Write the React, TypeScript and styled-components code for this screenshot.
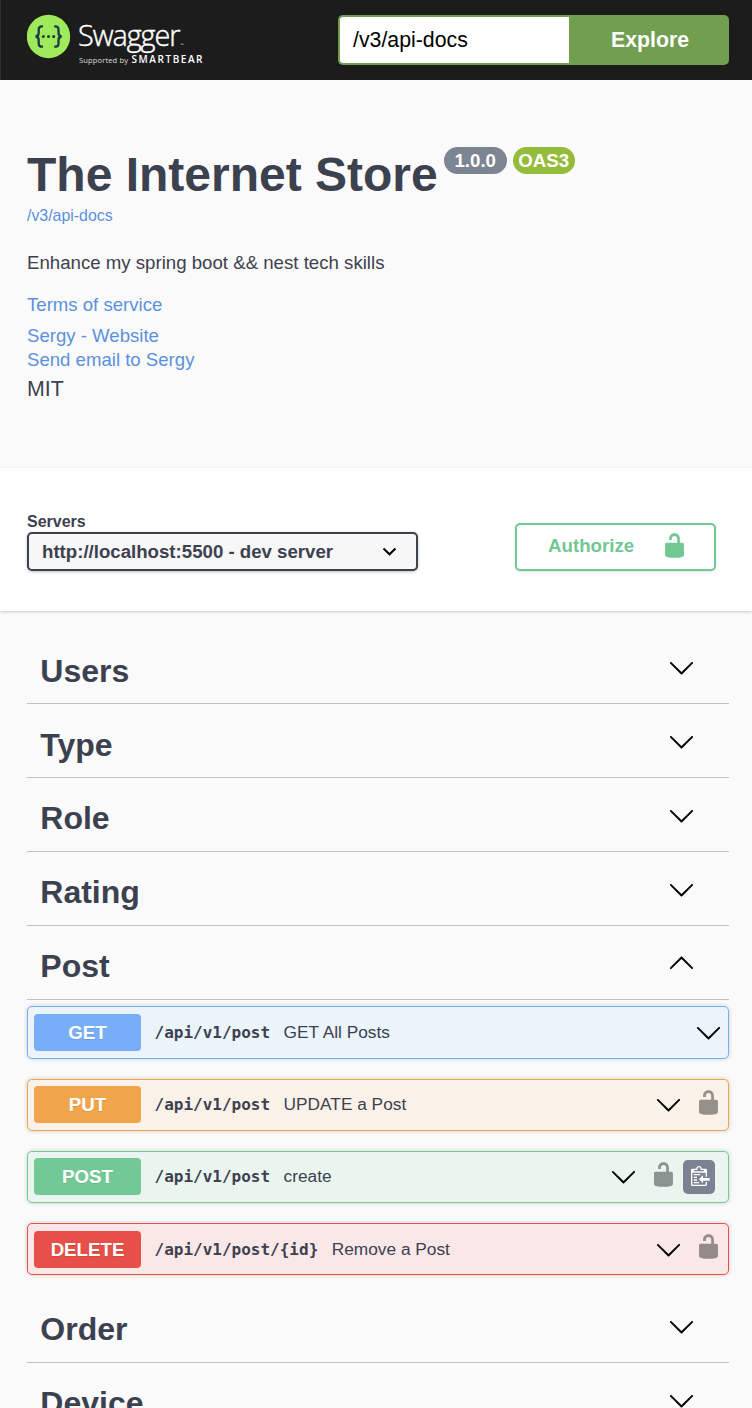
import React from "react";
import styled, { createGlobalStyle } from "styled-components";

const GlobalStyle = createGlobalStyle`
  *, *::before, *::after { box-sizing: border-box; }
  body {
    margin: 0;
    background: #fafafa;
    color: #3c414f;
    font-family: "Liberation Sans", Arial, sans-serif;
  }
  button, input, select { font-family: inherit; }
`;

const Page = styled.div`
  height: 100vh;
  overflow: hidden;
`;

const TopBar = styled.header`
  display: flex;
  align-items: center;
  justify-content: space-between;
  height: 80px;
  padding: 0 23px 0 26px;
  background: #1c1c1c;
  border-left: 1px solid #2f2f2f;
`;

const Logo = styled.svg`
  display: block;
  width: 180px;
  height: 80px;
`;

const UrlForm = styled.form`
  display: flex;
  width: 391px;
  height: 50px;
`;

const UrlInput = styled.input`
  width: 231px;
  padding: 0 13px;
  border: 2px solid #719e4f;
  border-right: 0;
  border-radius: 5px 0 0 5px;
  background: #fff;
  color: #000;
  font-size: 21.3px;
  outline: none;
`;

const ExploreButton = styled.button`
  flex: 1;
  padding: 0 0 0 2px;
  border: 0;
  border-radius: 0 5px 5px 0;
  background: #719e4f;
  color: #fff;
  font-size: 21.3px;
  font-weight: 700;
`;

const Info = styled.section`
  height: 388px;
  padding: 67px 27px 0;
`;

const TitleRow = styled.div`
  display: flex;
  align-items: flex-start;
`;

const Title = styled.h1`
  margin: 0 6px 0 0;
  font-size: 48px;
  line-height: 56px;
  white-space: nowrap;
`;

const Badge = styled.span<{ $color: string; $width: number }>`
  width: ${(p) => p.$width}px;
  height: 27px;
  margin-right: 6px;
  border-radius: 14px;
  background: ${(p) => p.$color};
  color: #fff;
  font-size: 18.7px;
  font-weight: 700;
  line-height: 27px;
  text-align: center;
`;

const InfoLink = styled.a<{ $size?: number; $line?: number; $top?: number }>`
  display: block;
  margin-top: ${(p) => p.$top ?? 0}px;
  color: #5a91de;
  font-size: ${(p) => p.$size ?? 18.6}px;
  line-height: ${(p) => p.$line ?? 24}px;
  text-decoration: none;
`;

const Description = styled.p`
  margin: 24px 0 0;
  font-size: 18.65px;
  line-height: 28px;
`;

const License = styled.div`
  margin-top: 3px;
  font-size: 21.3px;
  line-height: 28px;
`;

const SchemeBar = styled.section`
  display: flex;
  justify-content: space-between;
  height: 143px;
  padding: 44px 36px 0 27px;
  background: #fff;
  box-shadow: 0 1.3px 2.6px rgba(0, 0, 0, 0.2);
`;

const Servers = styled.label`
  display: block;
  width: 391px;
  font-size: 16px;
  font-weight: 700;
  line-height: 20px;
`;

const ServerSelect = styled.div`
  display: flex;
  align-items: center;
  justify-content: space-between;
  height: 39px;
  padding: 0 19px 0 13px;
  border: 2px solid #3c414f;
  border-radius: 5px;
  background: #f7f7f7;
  box-shadow: 0 1px 3px rgba(0, 0, 0, 0.25);
  font-size: 18.65px;
  white-space: nowrap;
`;

const AuthorizeButton = styled.button`
  display: flex;
  justify-content: space-between;
  width: 201px;
  height: 48px;
  margin-top: 11px;
  padding: 7px 26px 0 31px;
  border: 2px solid #72c893;
  border-radius: 5px;
  background: #fff;
  box-shadow: 0 1px 3px rgba(0, 0, 0, 0.12);
  color: #72c893;
  font-size: 18.7px;
  font-weight: 700;
  line-height: 27px;
`;

const Sections = styled.main`
  padding: 19px 23px 0 27px;
`;

const TagRow = styled.div`
  display: flex;
  align-items: center;
  justify-content: space-between;
  height: 73.91px;
  padding: 0 34px 0 13.3px;
  border-bottom: 1px solid #c0c1c4;
`;

const TagName = styled.h3`
  margin: 0;
  padding-top: 8.36px;
  font-size: 32px;
  line-height: 40px;
`;

const TagToggle = styled.span`
  padding-top: 2px;
`;

const Operations = styled.div`
  display: flex;
  flex-direction: column;
  gap: 20px;
  padding: 6.87px 0 13.55px;
`;

const OpRow = styled.div<{ $color: string; $tint: string }>`
  display: flex;
  align-items: center;
  height: 52.2px;
  padding: 0 6.5px 0 6px;
  border: 1px solid ${(p) => p.$color};
  border-radius: 5px;
  background: ${(p) => p.$tint};
  box-shadow: 0 0 4px rgba(0, 0, 0, 0.19);
`;

const Method = styled.span<{ $color: string }>`
  width: 107px;
  height: 37px;
  border-radius: 4px;
  background: ${(p) => p.$color};
  color: #fff;
  font-size: 18.7px;
  font-weight: 700;
  line-height: 37px;
  text-align: center;
  text-shadow: 0 1px 0 rgba(0, 0, 0, 0.1);
`;

const Path = styled.span`
  margin-left: 13.5px;
  font-family: "DejaVu Sans Mono", monospace;
  font-size: 16px;
  font-weight: 700;
`;

const Summary = styled.span`
  flex: 1;
  margin-left: 13.5px;
  font-size: 17.3px;
`;

const RowLock = styled.span`
  display: flex;
  margin: 0 0 5px 13px;
  color: #000;
  opacity: 0.4;
`;

const CopyButton = styled.span`
  display: flex;
  width: 32px;
  height: 34px;
  margin: 0 6.5px 0 6px;
  padding: 6px 0 0 8px;
  border-radius: 5px;
  background: #7d8293;
`;

const Icon = styled.svg<{ $flip?: boolean }>`
  display: block;
  flex: none;
  width: 27px;
  height: 27px;
  fill: currentColor;
  transform: ${(p) => (p.$flip ? "rotate(180deg)" : "none")};
`;

const ChevronIcon = styled(Icon)`
  color: #000;
`;

const CopyGlyph = styled.svg`
  display: block;
  width: 20px;
  height: 22px;
  fill: #fff;
`;

const SelectGlyph = styled.svg`
  width: 15px;
  height: 11px;
  fill: none;
  stroke: #000;
  stroke-width: 2;
`;

const Chevron = ({ up }: { up?: boolean }) => (
  <ChevronIcon viewBox="0 0 20 20" $flip={up}>
    <path d="M17.418 6.109c.272-.268.709-.268.979 0s.271.701 0 .969l-7.908 7.83c-.27.268-.707.268-.979 0l-7.908-7.83c-.27-.268-.27-.701 0-.969.271-.268.709-.268.979 0L10 13.25l7.418-7.141z" />
  </ChevronIcon>
);

const Unlocked = () => (
  <Icon viewBox="0 0 20 20">
    <path d="M15.8 8H14V5.6C14 2.703 12.665 1 10 1 7.334 1 6 2.703 6 5.6V6h2v-.801C8 3.754 8.797 3 10 3c1.203 0 2 .754 2 2.199V8H4c-.553 0-1 .646-1 1.199V17c0 .549.428 1.139.951 1.307l1.197.387C5.672 18.861 6.55 19 7.1 19h5.8c.549 0 1.428-.139 1.951-.307l1.196-.387c.524-.167.953-.757.953-1.306V9.199C17 8.646 16.352 8 15.8 8z" />
  </Icon>
);

const CopyIcon = () => (
  <CopyGlyph viewBox="0 0 15 16.5">
    <path
      fillRule="evenodd"
      transform="translate(0 -1)"
      d="M2 13h4v1H2v-1zm5-6H2v1h5V7zm2 3V8l-3 3 3 3v-2h5v-2H9zM4.5 9H2v1h2.5V9zM2 12h2.5v-1H2v1zm9 1h1v2c-.02.28-.11.52-.3.7-.19.18-.42.28-.7.3H1c-.55 0-1-.45-1-1V4c0-.55.45-1 1-1h3c0-1.11.89-2 2-2 1.11 0 2 .89 2 2h3c.55 0 1 .45 1 1v5h-1V6H1v9h10v-2zM2 5h8c0-.55-.45-1-1-1H8c-.55 0-1-.45-1-1s-.45-1-1-1-1 .45-1 1-.45 1-1 1H3c-.55 0-1 .45-1 1z"
    />
  </CopyGlyph>
);

const SwaggerLogo = () => (
  <Logo viewBox="27 0 180 80">
    <circle cx="48.5" cy="36.5" r="21.7" fill="#9fea5a" />
    <g fill="none" stroke="#1d3a45" strokeWidth="2.3">
      <path d="M43 26.4c-3.2-.3-4.3.8-4.3 3.2v3.2c0 2.3-.8 3.6-3.2 3.7 2.4.1 3.2 1.4 3.2 3.7v3.2c0 2.4 1.1 3.5 4.3 3.2" />
      <path d="M54.2 26.4c3.2-.3 4.3.8 4.3 3.2v3.2c0 2.3.8 3.6 3.2 3.7-2.4.1-3.2 1.4-3.2 3.7v3.2c0 2.4-1.1 3.5-4.3 3.2" />
    </g>
    <g fill="#1d3a45">
      <circle cx="43.3" cy="36.5" r="1.5" />
      <circle cx="48.5" cy="36.5" r="1.5" />
      <circle cx="53.7" cy="36.5" r="1.5" />
    </g>
    <g fill="#fff" fontFamily='"Open Sans", sans-serif'>
      <text x="78" y="45.7" fontSize="28.8" fontWeight="300" stroke="#fff" strokeWidth="0.45" textLength="102.5">Swagger</text>
      <text x="180.8" y="45.5" fontSize="3.5">™</text>
      <text x="79" y="63.4" fontSize="7.6" fillOpacity="0.85" textLength="49">Supported by</text>
      <text x="131.5" y="63.4" fontSize="10" fontWeight="600" textLength="71">SMARTBEAR</text>
    </g>
  </Logo>
);

type Operation = {
  method: string;
  path: string;
  summary: string;
  color: string;
  tint: string;
  locked?: boolean;
  copy?: boolean;
};

const postOperations: Operation[] = [
  { method: "GET", path: "/api/v1/post", summary: "GET All Posts", color: "#77aef7", tint: "#ebf3fb" },
  { method: "PUT", path: "/api/v1/post", summary: "UPDATE a Post", color: "#f0a54d", tint: "#faf1e8", locked: true },
  { method: "POST", path: "/api/v1/post", summary: "create", color: "#73c995", tint: "#ebf5f0", locked: true, copy: true },
  { method: "DELETE", path: "/api/v1/post/{id}", summary: "Remove a Post", color: "#e65049", tint: "#f9e8e7", locked: true },
];

const Tag = ({ name, open }: { name: string; open?: boolean }) => (
  <TagRow>
    <TagName>{name}</TagName>
    <TagToggle>
      <Chevron up={open} />
    </TagToggle>
  </TagRow>
);

export default function App() {
  return (
    <Page>
      <GlobalStyle />
      <TopBar>
        <SwaggerLogo />
        <UrlForm>
          <UrlInput defaultValue="/v3/api-docs" />
          <ExploreButton type="button">Explore</ExploreButton>
        </UrlForm>
      </TopBar>
      <Info>
        <TitleRow>
          <Title>The Internet Store</Title>
          <Badge $color="#7d8492" $width={63}>1.0.0</Badge>
          <Badge $color="#95bb3b" $width={62}>OAS3</Badge>
        </TitleRow>
        <InfoLink $size={15.9} $line={18} $top={4}>/v3/api-docs</InfoLink>
        <Description>Enhance my spring boot &amp;&amp; nest tech skills</Description>
        <InfoLink $top={16}>Terms of service</InfoLink>
        <InfoLink $top={7}>Sergy - Website</InfoLink>
        <InfoLink>Send email to Sergy</InfoLink>
        <License>MIT</License>
      </Info>
      <SchemeBar>
        <Servers>
          Servers
          <ServerSelect>
            http://localhost:5500 - dev server
            <SelectGlyph viewBox="0 0 15 11">
              <path d="M1.5 2.5l6 5.8 6-5.8" />
            </SelectGlyph>
          </ServerSelect>
        </Servers>
        <AuthorizeButton type="button">
          Authorize
          <Unlocked />
        </AuthorizeButton>
      </SchemeBar>
      <Sections>
        <Tag name="Users" />
        <Tag name="Type" />
        <Tag name="Role" />
        <Tag name="Rating" />
        <Tag name="Post" open />
        <Operations>
          {postOperations.map((op) => (
            <OpRow key={op.method} $color={op.color} $tint={op.tint}>
              <Method $color={op.color}>{op.method}</Method>
              <Path>{op.path}</Path>
              <Summary>{op.summary}</Summary>
              <Chevron />
              {op.locked && (
                <RowLock>
                  <Unlocked />
                </RowLock>
              )}
              {op.copy && (
                <CopyButton>
                  <CopyIcon />
                </CopyButton>
              )}
            </OpRow>
          ))}
        </Operations>
        <Tag name="Order" />
        <Tag name="Device" />
      </Sections>
    </Page>
  );
}
